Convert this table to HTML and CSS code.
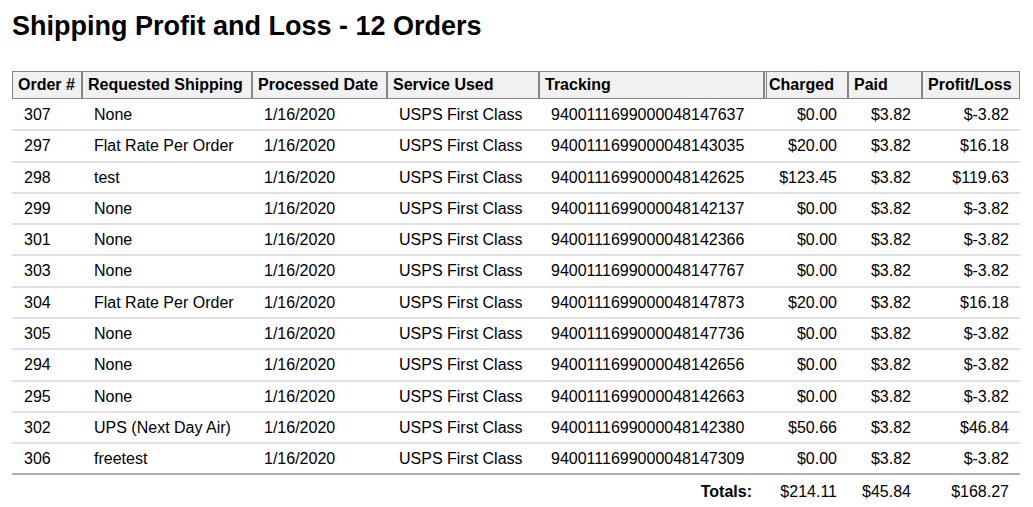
FILE: index.html
```html
<!DOCTYPE html>
<html>
<head>
<meta charset="utf-8">
<link rel="stylesheet" href="styles.css">
</head>
<body>
<h1 class="title">Shipping Profit and Loss - 12 Orders</h1>
<table class="report">
  <colgroup>
    <col class="c-order"><col class="c-req"><col class="c-date"><col class="c-svc"><col class="c-trk"><col class="c-chg"><col class="c-paid"><col class="c-pl">
  </colgroup>
  <thead>
    <tr>
      <th>Order #</th><th>Requested Shipping</th><th>Processed Date</th><th>Service Used</th><th>Tracking</th><th class="gap">Charged</th><th>Paid</th><th>Profit/Loss</th>
    </tr>
  </thead>
  <tbody>
    <tr><td>307</td><td>None</td><td>1/16/2020</td><td>USPS First Class</td><td>9400111699000048147637</td><td class="num">$0.00</td><td class="num">$3.82</td><td class="num">$-3.82</td></tr>
    <tr><td>297</td><td>Flat Rate Per Order</td><td>1/16/2020</td><td>USPS First Class</td><td>9400111699000048143035</td><td class="num">$20.00</td><td class="num">$3.82</td><td class="num">$16.18</td></tr>
    <tr><td>298</td><td>test</td><td>1/16/2020</td><td>USPS First Class</td><td>9400111699000048142625</td><td class="num">$123.45</td><td class="num">$3.82</td><td class="num">$119.63</td></tr>
    <tr><td>299</td><td>None</td><td>1/16/2020</td><td>USPS First Class</td><td>9400111699000048142137</td><td class="num">$0.00</td><td class="num">$3.82</td><td class="num">$-3.82</td></tr>
    <tr><td>301</td><td>None</td><td>1/16/2020</td><td>USPS First Class</td><td>9400111699000048142366</td><td class="num">$0.00</td><td class="num">$3.82</td><td class="num">$-3.82</td></tr>
    <tr><td>303</td><td>None</td><td>1/16/2020</td><td>USPS First Class</td><td>9400111699000048147767</td><td class="num">$0.00</td><td class="num">$3.82</td><td class="num">$-3.82</td></tr>
    <tr><td>304</td><td>Flat Rate Per Order</td><td>1/16/2020</td><td>USPS First Class</td><td>9400111699000048147873</td><td class="num">$20.00</td><td class="num">$3.82</td><td class="num">$16.18</td></tr>
    <tr><td>305</td><td>None</td><td>1/16/2020</td><td>USPS First Class</td><td>9400111699000048147736</td><td class="num">$0.00</td><td class="num">$3.82</td><td class="num">$-3.82</td></tr>
    <tr><td>294</td><td>None</td><td>1/16/2020</td><td>USPS First Class</td><td>9400111699000048142656</td><td class="num">$0.00</td><td class="num">$3.82</td><td class="num">$-3.82</td></tr>
    <tr><td>295</td><td>None</td><td>1/16/2020</td><td>USPS First Class</td><td>9400111699000048142663</td><td class="num">$0.00</td><td class="num">$3.82</td><td class="num">$-3.82</td></tr>
    <tr><td>302</td><td>UPS (Next Day Air)</td><td>1/16/2020</td><td>USPS First Class</td><td>9400111699000048142380</td><td class="num">$50.66</td><td class="num">$3.82</td><td class="num">$46.84</td></tr>
    <tr class="last"><td>306</td><td>freetest</td><td>1/16/2020</td><td>USPS First Class</td><td>9400111699000048147309</td><td class="num">$0.00</td><td class="num">$3.82</td><td class="num">$-3.82</td></tr>
  </tbody>
  <tfoot>
    <tr><td colspan="5" class="totals-label">Totals:</td><td class="num">$214.11</td><td class="num">$45.84</td><td class="num">$168.27</td></tr>
  </tfoot>
</table>
</body>
</html>
```
FILE: styles.css
```css
body {
  margin: 0;
  padding: 11px 12px 0 12px;
  font-family: "Liberation Sans", Arial, sans-serif;
  color: #000;
  background: #fff;
}
.title {
  font-size: 27px;
  font-weight: bold;
  margin: 0 0 29px 0;
  line-height: 31px;
}
.report {
  width: 1008px;
  border-collapse: separate;
  border-spacing: 0;
  table-layout: fixed;
  font-size: 16px;
}
.c-order { width: 70px; }
.c-req { width: 170px; }
.c-date { width: 135px; }
.c-svc { width: 152px; }
.c-trk { width: 225px; }
.c-chg { width: 84px; }
.c-paid { width: 74px; }
.c-pl { width: 98px; }
.report th {
  background: #f1f1f1;
  border: 1px solid #858585;
  padding: 4px 5px 4px 5px;
  line-height: 18px;
  text-align: left;
  font-weight: bold;
  white-space: nowrap;
}
.report th.gap {
  border-left: 3px double #858585;
  padding-left: 2px;
}
.report tbody td {
  padding: 6px 11px 6px 12px;
  line-height: 17.28px;
  border-top: 2px solid #e0e0e0;
  white-space: nowrap;
}
.report tbody tr:first-child td {
  border-top: none;
  padding-top: 7px;
  padding-bottom: 6px;
}
.report tbody tr.last td {
  border-bottom: 2px solid #b0b0b0;
}
.report td.num {
  text-align: right;
}
.report tfoot td {
  padding: 8px 11px 6px 12px;
  line-height: 18px;
}
.report tfoot td.totals-label {
  text-align: right;
  font-weight: bold;
  padding-right: 12px;
}
```
